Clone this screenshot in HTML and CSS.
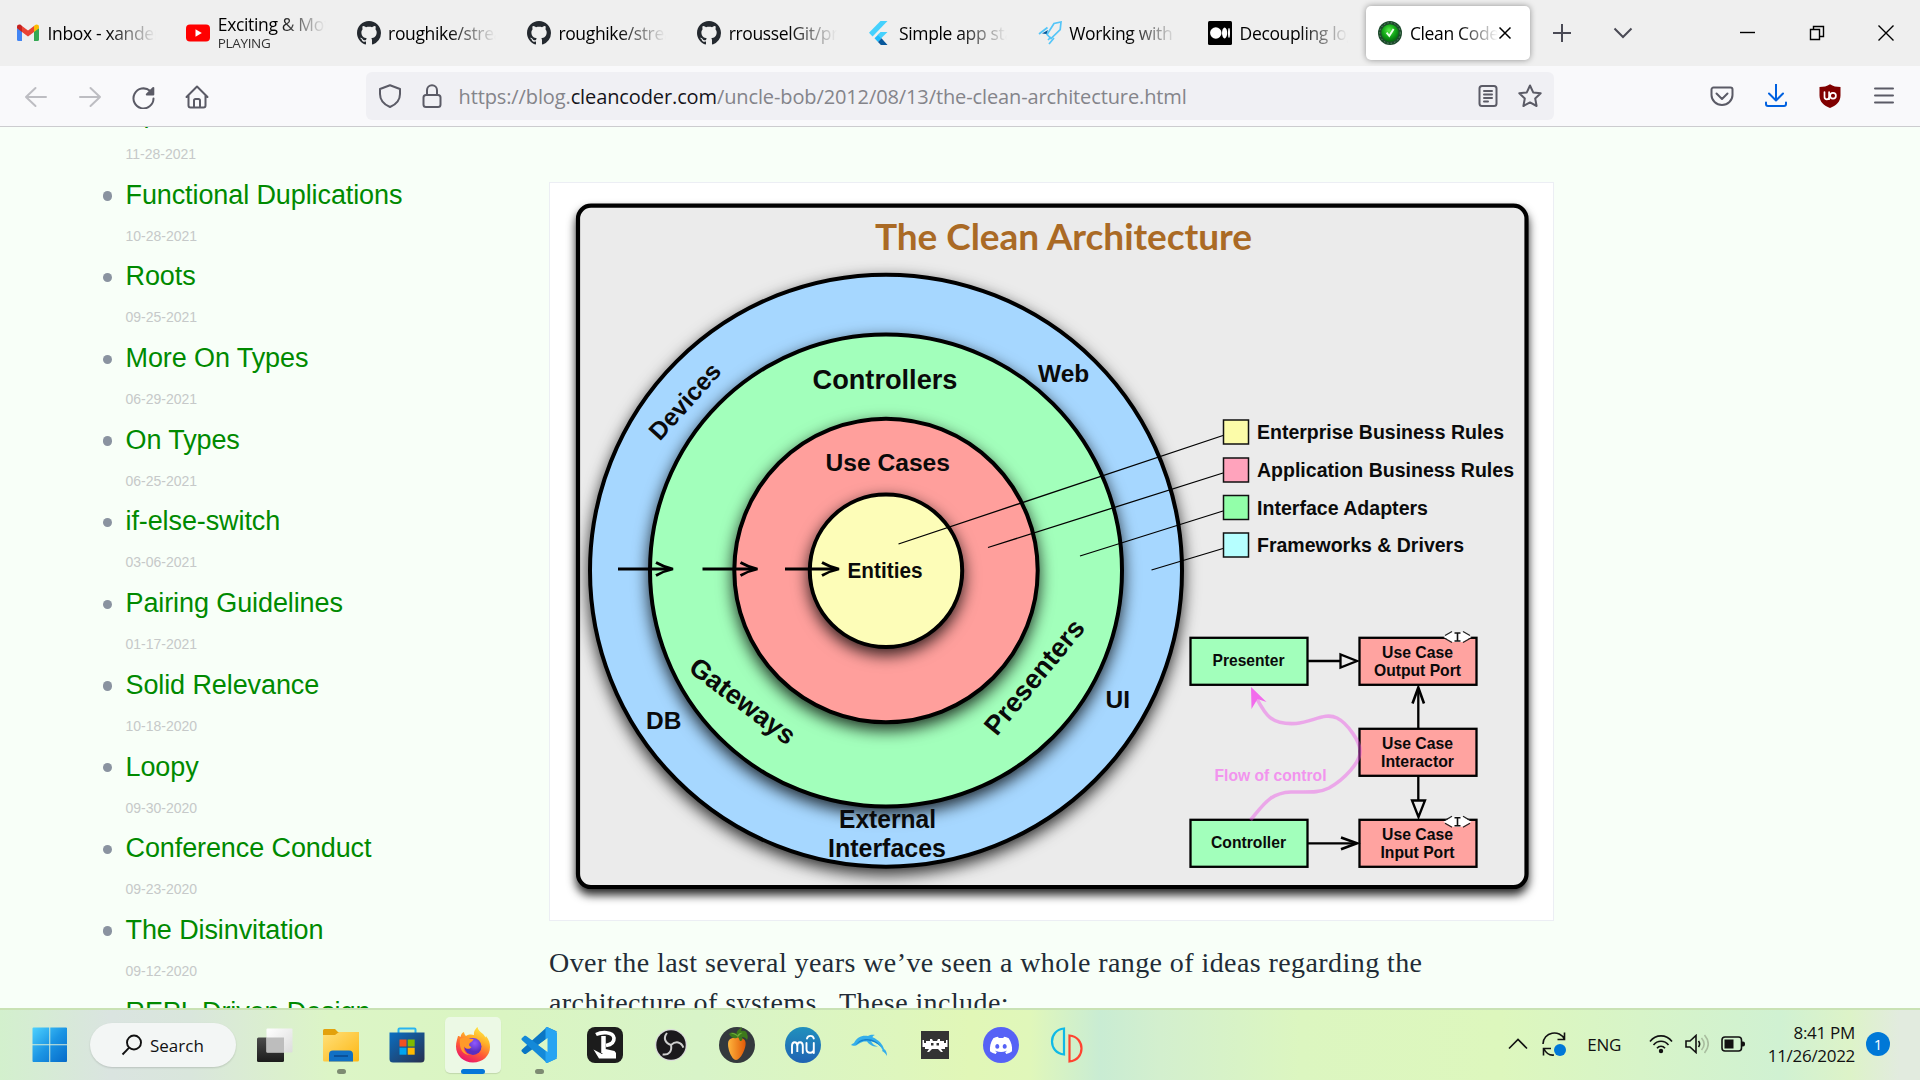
FILE: index.html
```html
<!DOCTYPE html>
<html lang="en">
<head>
<meta charset="utf-8">
<title>Clean Coder Blog</title>
<link rel="stylesheet" href="styles.css">
</head>
<body>
<svg class="defs" aria-hidden="true">
  <defs>
    <symbol id="github" viewBox="0 0 16 16"><path fill="#24292f" d="M8 0C3.58 0 0 3.58 0 8c0 3.54 2.29 6.53 5.47 7.59.4.07.55-.17.55-.38 0-.19-.01-.82-.01-1.49-2.01.37-2.53-.49-2.69-.94-.09-.23-.48-.94-.82-1.13-.28-.15-.68-.52-.01-.53.63-.01 1.08.58 1.23.82.72 1.21 1.87.87 2.33.66.07-.52.28-.87.51-1.07-1.78-.2-3.64-.89-3.64-3.95 0-.87.31-1.59.82-2.15-.08-.2-.36-1.02.08-2.12 0 0 .67-.21 2.2.82.64-.18 1.32-.27 2-.27s1.36.09 2 .27c1.53-1.04 2.2-.82 2.2-.82.44 1.1.16 1.92.08 2.12.51.56.82 1.27.82 2.15 0 3.07-1.87 3.75-3.65 3.95.29.25.54.73.54 1.48 0 1.07-.01 1.93-.01 2.2 0 .21.15.46.55.38A8 8 0 0 0 16 8c0-4.42-3.58-8-8-8z"/></symbol>
  </defs>
</svg>

<header class="tabstrip">
  <div class="tab">
    <svg class="fav" viewBox="0 0 24 24"><path fill="#4285f4" d="M1 7v11.5A1.5 1.5 0 0 0 2.500 20H6V10z"/><path fill="#34a853" d="M18 10v10h3.500a1.500 1.500 0 0 0 1.500-1.500V7z"/><path fill="#fbbc04" d="M18 5v6l5-3.800V6c0-2.400-2.500-3-4-1.900z"/><path fill="#ea4335" d="M6 11V5l6 4.600L18 5v6l-6 4.600z"/><path fill="#c5221f" d="M1 6v1.200L6 11V5L5 4.100C3.300 3 1 3.800 1 6z"/></svg>
    <span class="tab-title"><span>Inbox - xander</span></span>
  </div>
  <div class="tab">
    <svg class="fav" viewBox="0 0 24 24"><rect y="3.500" width="24" height="17" rx="4" fill="#f00"/><path fill="#fff" d="M9.500 8.300v7.400L15.800 12z"/></svg>
    <span class="tab-title two"><span>Exciting &amp; Mot</span><small>PLAYING</small></span>
  </div>
  <div class="tab"><svg class="fav"><use href="#github"/></svg><span class="tab-title"><span>roughike/stream</span></span></div>
  <div class="tab"><svg class="fav"><use href="#github"/></svg><span class="tab-title"><span>roughike/stream</span></span></div>
  <div class="tab"><svg class="fav"><use href="#github"/></svg><span class="tab-title"><span>rrousselGit/prov</span></span></div>
  <div class="tab">
    <svg class="fav" viewBox="0 0 24 24"><path fill="#45d1fd" d="M13.500 0 2 11.800l3.600 3.600L20.500 0z"/><path fill="#45d1fd" d="M13.500 11h7l-6.300 6.300-3.500-3.500z" /><path fill="#1fbcfd" d="m7.500 17.300 3.500-3.500 3.500 3.500-3.500 3.600z"/><path fill="#08589c" d="m11 20.900 3.500-3.600 6 6.700h-6.600z"/></svg>
    <span class="tab-title"><span>Simple app state</span></span>
  </div>
  <div class="tab">
    <svg class="fav" viewBox="0 0 24 24"><g fill="none" stroke="#54c5f8" stroke-width="1.700"><path d="M9 13.500 16 2.500 23 1l-.8 7.500L13 17.500z"/><path d="M1 13 9.500 6.500M11 23l5-6M10 19l3-3"/></g><path fill="#01579b" d="m4 12.500 6-3.500-1.500 4z"/></svg>
    <span class="tab-title"><span>Working with s</span></span>
  </div>
  <div class="tab">
    <svg class="fav" viewBox="0 0 24 24"><rect width="24" height="24" rx="1.500" fill="#000"/><circle cx="7.800" cy="12" r="5.700" fill="#fff"/><ellipse cx="16.600" cy="12" rx="2.600" ry="5.400" fill="#fff"/><ellipse cx="21" cy="12" rx="1" ry="4.900" fill="#fff"/></svg>
    <span class="tab-title"><span>Decoupling log</span></span>
  </div>
  <div class="tab active">
    <svg class="fav" viewBox="0 0 24 24"><defs><radialGradient id="orb" cx=".45" cy=".35" r=".6"><stop offset="0" stop-color="#5df04c"/><stop offset=".6" stop-color="#12a817"/><stop offset="1" stop-color="#067010"/></radialGradient></defs><circle cx="12" cy="12" r="12" fill="#1d4a2c"/><circle cx="12" cy="12" r="10.300" fill="none" stroke="#6c9a78" stroke-width=".8" stroke-dasharray="1.500 2"/><circle cx="12" cy="12" r="8.700" fill="url(#orb)"/><path d="m8.600 11.600 2.700 3.200 4.300-6.800" fill="none" stroke="#eaffea" stroke-width="1.900"/></svg>
    <span class="tab-title short"><span>Clean Coder</span></span>
    <svg class="tab-close" viewBox="0 0 14 14"><path d="m1.500 1.500 11 11m0-11-11 11"/></svg>
  </div>
  <svg class="plus" viewBox="0 0 20 20"><path d="M10 1v18M1 10h18"/></svg>
  <svg class="alltabs" viewBox="0 0 20 12"><path d="m1.500 1.500 8.500 8.500 8.500-8.500"/></svg>
  <div class="winctl">
    <svg viewBox="0 0 16 16"><path d="M0 7.500h15"/></svg>
    <svg viewBox="0 0 16 16"><path d="M1.500 4.500h9v10h-9zM4.500 4.500v-3h10v10h-4"/></svg>
    <svg viewBox="0 0 16 16"><path d="m.5.500 15 15m0-15-15 15"/></svg>
  </div>
</header>

<nav class="toolbar">
  <div class="nav-btns">
    <svg class="off" viewBox="0 0 24 24"><path d="M22 12H2m9.500-9L2 12l9.500 9"/></svg>
    <svg class="off" viewBox="0 0 24 24"><path d="M2 12h20m-9.500-9L22 12l-9.500 9"/></svg>
    <svg viewBox="0 0 24 24"><path d="M22.500 13.500A10 10 0 1 1 19 5.800"/><path fill="#5b5b66" d="M22.300 3v6.500h-6.500z"/></svg>
    <svg viewBox="0 0 24 24"><path d="M1.500 12 12 1.500 22.500 12M3.500 10.500v10a2 2 0 0 0 2 2h13a2 2 0 0 0 2-2v-10M9 22v-6.500a1.500 1.500 0 0 1 1.500-1.500h3a1.500 1.500 0 0 1 1.500 1.500V22"/></svg>
  </div>
  <div class="urlbar">
    <svg viewBox="0 0 24 24"><path d="M12 1.200 22 5v5c0 6.500-4 10.500-10 13C6 20.500 2 16.500 2 10V5z"/></svg>
    <svg class="lock" viewBox="0 0 24 24"><rect x="3.500" y="11" width="17" height="12" rx="2.500"/><path d="M7 11V6.200a5 5 0 0 1 10 0V11"/></svg>
    <span class="url">https://blog.<b>cleancoder.com</b>/uncle-bob/2012/08/13/the-clean-architecture.html</span>
    <svg class="reader" viewBox="0 0 24 24"><rect x="3.500" y="2" width="17" height="20" rx="2.500"/><path d="M8 7h8M8 10.500h8M8 14h8M8 17.500h4"/></svg>
    <svg class="star" viewBox="0 0 24 24"><path d="m12 1.500 3.200 6.900 7.500.9-5.500 5.200 1.400 7.500L12 18.400 5.400 22l1.400-7.500L1.300 9.300l7.500-.9z"/></svg>
  </div>
  <div class="ext">
    <svg viewBox="0 0 24 24"><path d="M3.500 3.500h17a2 2 0 0 1 2 2V11a10.500 10 0 0 1-21 0V5.500a2 2 0 0 1 2-2zM6.500 9.500 12 15l5.500-5.500"/></svg>
    <svg class="blue" viewBox="0 0 24 24"><path d="M12 0v16M5 9.500 12 16.500 19 9.500M2 18.500V20a2 2 0 0 0 2 2h16a2 2 0 0 0 2-2v-1.500"/></svg>
    <svg class="ublock" viewBox="0 0 24 24"><path fill="#800000" d="M12 .3c3 2.200 6.500 2.700 10.500 2.700v8.500C22.500 18 18 21.500 12 24 6 21.500 1.500 18 1.500 11.500V3C5.500 3 9 2.500 12 .3z"/><path d="M6.500 8v5a2 2 0 0 0 4.600 0V8m0 7.200V8" fill="none" stroke="#fff" stroke-width="1.700"/><circle cx="15" cy="11.700" r="2.900" fill="none" stroke="#fff" stroke-width="1.700"/></svg>
    <svg viewBox="0 0 24 24"><path d="M3 4.500h18M3 11.500h18M3 18.500h18"/></svg>
  </div>
</nav>

<main class="page">
  <aside class="sidebar">
    <ul>
      <li><a>Spacewar</a><time>11-28-2021</time></li>
      <li><a>Functional Duplications</a><time>10-28-2021</time></li>
      <li><a>Roots</a><time>09-25-2021</time></li>
      <li><a>More On Types</a><time>06-29-2021</time></li>
      <li><a>On Types</a><time>06-25-2021</time></li>
      <li><a>if-else-switch</a><time>03-06-2021</time></li>
      <li><a>Pairing Guidelines</a><time>01-17-2021</time></li>
      <li><a>Solid Relevance</a><time>10-18-2020</time></li>
      <li><a>Loopy</a><time>09-30-2020</time></li>
      <li><a>Conference Conduct</a><time>09-23-2020</time></li>
      <li><a>The Disinvitation</a><time>09-12-2020</time></li>
      <li><a>REPL Driven Design</a></li>
    </ul>
  </aside>
  <article>
    <figure>
      <svg class="diagram" viewBox="549 182 1005 739">
        <defs>
          <filter id="drop" x="-20%" y="-20%" width="140%" height="140%"><feDropShadow dx="0" dy="6" stdDeviation="8" flood-color="#000" flood-opacity=".8"/></filter>
          <filter id="dropFrame" x="-5%" y="-5%" width="110%" height="112%"><feDropShadow dx="0" dy="6" stdDeviation="5" flood-color="#000" flood-opacity=".85"/></filter>
          <g id="head"><path d="M-17-6.500Q-9-1.800 0 0-9 1.800-17 6.500" fill="none" stroke="#000" stroke-width="2.800"/></g>
        </defs>
        <rect x="578" y="205.700" width="948.500" height="681.300" rx="13" fill="#ebebeb" stroke="#000" stroke-width="4.200" filter="url(#dropFrame)"/>
        <text class="title" x="875" y="249.500" textLength="377">The Clean Architecture</text>

        <g stroke="#000" stroke-width="4">
          <circle cx="886" cy="570.700" r="296" fill="#a6d7ff" filter="url(#drop)"/>
          <circle cx="886" cy="570.500" r="236" fill="#a2ffbb" filter="url(#drop)"/>
          <circle cx="886" cy="570.500" r="151.700" fill="#ff9f9c" filter="url(#drop)"/>
          <circle cx="886" cy="570.700" r="76.200" fill="#fdfdb8" filter="url(#drop)"/>
        </g>

        <g stroke="#000" stroke-width="1.300" fill="none">
          <path d="M898.500 544 1223 435.500M988 547.500 1223 473M1080 556 1223 511M1151.500 570 1223 548.500"/>
        </g>
        <g stroke="#111" stroke-width="1.500">
          <rect x="1223.500" y="420" width="25" height="24" fill="#fcfca9"/>
          <rect x="1223.500" y="458" width="25" height="24" fill="#ffa3bc"/>
          <rect x="1223.500" y="495.500" width="25" height="24" fill="#92ffa9"/>
          <rect x="1223.500" y="533" width="25" height="24" fill="#b6ffff"/>
        </g>
        <g class="lbl" font-size="20">
          <text x="1257" y="439" textLength="247" lengthAdjust="spacingAndGlyphs">Enterprise Business Rules</text>
          <text x="1257" y="477" textLength="257" lengthAdjust="spacingAndGlyphs">Application Business Rules</text>
          <text x="1257" y="514.500" textLength="171" lengthAdjust="spacingAndGlyphs">Interface Adapters</text>
          <text x="1257" y="552" textLength="207" lengthAdjust="spacingAndGlyphs">Frameworks &amp; Drivers</text>
        </g>

        <g class="lbl">
          <text x="812.500" y="389" font-size="27" textLength="145" lengthAdjust="spacingAndGlyphs">Controllers</text>
          <text x="825.500" y="471" font-size="24.800" textLength="124.500" lengthAdjust="spacingAndGlyphs">Use Cases</text>
          <text x="847.500" y="578" font-size="21.500" textLength="75" lengthAdjust="spacingAndGlyphs">Entities</text>
          <text x="1038" y="381.500" font-size="24.500">Web</text>
          <text x="646" y="728.500" font-size="24.500">DB</text>
          <text x="1105.500" y="708" font-size="24.500">UI</text>
          <text x="839" y="827.500" font-size="25" textLength="97" lengthAdjust="spacingAndGlyphs">External</text>
          <text x="828" y="857.300" font-size="25" textLength="118" lengthAdjust="spacingAndGlyphs">Interfaces</text>
          <text transform="translate(684.500 401) rotate(-48)" y="9" text-anchor="middle" font-size="24.800">Devices</text>
          <text transform="translate(742 702) rotate(37)" y="8" text-anchor="middle" font-size="26.800">Gateways</text>
          <text transform="translate(1034.500 677) rotate(-50.500)" y="9" text-anchor="middle" font-size="27.200">Presenters</text>
        </g>

        <g stroke="#000" stroke-width="2.800"><path d="M618 569h52M702.500 569h52M785 569h52"/></g>
        <use href="#head" x="673" y="569"/><use href="#head" x="757.500" y="569"/><use href="#head" x="839" y="569"/>

        <g stroke="#000" stroke-width="2.300">
          <rect x="1190.500" y="637.800" width="117" height="47" fill="#a2ffbb"/>
          <rect x="1190.500" y="819.800" width="117" height="47" fill="#a2ffbb"/>
          <rect x="1359.500" y="637.800" width="117" height="47" fill="#ffa3a0"/>
          <rect x="1359.500" y="728.800" width="117" height="47" fill="#ffa3a0"/>
          <rect x="1359.500" y="819.800" width="117" height="47" fill="#ffa3a0"/>
          <path d="M1308 661h32M1418.300 728v-40M1418.300 776v24M1308 843.300h48" fill="none"/>
          <path d="M1340.500 654.500v13l16.500-6.500zM1412 800.500h13l-6.500 16.500z" fill="#ebebeb"/>
          <path d="M1341 837.500 1357 843.300 1341 849.200M1412.500 703.500 1418.300 687.500 1424 703.500" fill="none" stroke-width="2.600"/>
        </g>
        <g class="lbl" font-size="16.500">
          <text x="1212.500" y="666" textLength="72" lengthAdjust="spacingAndGlyphs">Presenter</text>
          <text x="1211" y="848" textLength="75" lengthAdjust="spacingAndGlyphs">Controller</text>
          <text x="1382" y="657.500" textLength="71" lengthAdjust="spacingAndGlyphs">Use Case</text>
          <text x="1374" y="675.800" textLength="87" lengthAdjust="spacingAndGlyphs">Output Port</text>
          <text x="1382" y="748.500" textLength="71" lengthAdjust="spacingAndGlyphs">Use Case</text>
          <text x="1381" y="766.800" textLength="73" lengthAdjust="spacingAndGlyphs">Interactor</text>
          <text x="1382" y="839.500" textLength="71" lengthAdjust="spacingAndGlyphs">Use Case</text>
          <text x="1380.500" y="857.800" textLength="74" lengthAdjust="spacingAndGlyphs">Input Port</text>
          <text x="1214.500" y="780.700" textLength="112" lengthAdjust="spacingAndGlyphs" fill="#f294ee">Flow of control</text>
        </g>
        <g>
          <path d="M1443.500 637l9-5h10l9 5-9 5h-10zM1443.500 821.700l9-5h10l9 5-9 5h-10z" fill="#fff"/>
          <path d="M1445 635.500l7-4M1463 631.500l7 4M1445 638.500l7 4M1463 642.500l7-4M1445 820.200l7-4M1463 816.200l7 4M1445 823.200l7 4M1463 827.200l7-4" stroke="#222" stroke-width="1.200"/>
          <path d="M1454.500 633h6M1457.500 633v8M1454.500 641h6M1454.500 817.700h6M1457.500 817.700v8M1454.500 825.700h6" stroke="#111" stroke-width="1.600"/>
        </g>
        <g fill="none" stroke="#ec4be6" stroke-opacity=".42" stroke-width="3.600">
          <path d="M1250.500 820C1264 804 1270 793 1291 792 1310 792 1319 793 1329 788 1345 779 1360 762 1360 752 1361 742 1347 723 1337 718 1325 712 1313 722 1296 723.500 1270 725 1265 714 1256 697"/>
        </g>
        <path d="M1251 687 1266.500 702 1257.500 699 1251.500 709z" fill="#f26bec"/>
      </svg>
    </figure>
    <p>Over the last several years we’ve seen a whole range of ideas regarding the architecture of systems. &nbsp;These include:</p>
  </article>
</main>

<footer class="taskbar">
  <div class="start"><svg viewBox="0 0 36 36"><defs><linearGradient id="w" x1="0" y1="0" x2="36" y2="36" gradientUnits="userSpaceOnUse"><stop offset="0" stop-color="#4fd3ff"/><stop offset=".5" stop-color="#1b95e4"/><stop offset="1" stop-color="#0569c8"/></linearGradient></defs><path fill="url(#w)" d="M.5 1.500A1 1 0 0 1 1.500.5H17.500V17.500H.5zM18.500.5h16a1 1 0 0 1 1 1v16h-17zM.5 18.500h17v17h-16a1 1 0 0 1-1-1zM18.500 18.500h17v16a1 1 0 0 1-1 1h-16z"/></svg></div>
  <div class="search"><svg viewBox="0 0 22 22"><circle cx="13" cy="8.500" r="7" /><path d="M8.200 13.600 1.500 20.500"/></svg><span>Search</span></div>
  <div class="apps">
    <div class="app"><svg viewBox="0 0 36 36"><defs><linearGradient id="tv" x2="0" y2="1"><stop stop-color="#4b4b4b"/><stop offset="1" stop-color="#1c1c1c"/></linearGradient><linearGradient id="tw" x2="1" y2="1"><stop stop-color="#fff"/><stop offset="1" stop-color="#dcdcdc"/></linearGradient></defs><rect x="0" y="10.500" width="27" height="24.500" rx="1.500" fill="url(#tv)"/><rect x="9.500" y="1.500" width="26" height="24" rx="1" fill="url(#tw)"/><path fill="#bdbdbd" d="M9.500 10.500H27v15H9.500z"/></svg></div>
    <div class="app run"><svg viewBox="0 0 36 36"><defs><linearGradient id="fo" x2="1" y2="1"><stop stop-color="#ffe07a"/><stop offset="1" stop-color="#fdb714"/></linearGradient></defs><path fill="#e3a10c" d="M0 3.500A1.500 1.500 0 0 1 1.500 2H12l3 3h19.500A1.500 1.500 0 0 1 36 6.500V12H0z"/><path fill="url(#fo)" d="M0 8h12l4-3h20v28a1.500 1.500 0 0 1-1.500 1.500h-33A1.500 1.500 0 0 1 0 33z"/><path fill="#1170c4" d="M6 34.500v-7a4 4 0 0 1 4-4h16a4 4 0 0 1 4 4v7z"/><path stroke="#0a4a90" stroke-width="1.600" d="M11 29h14"/></svg></div>
    <div class="app"><svg viewBox="0 0 36 36"><defs><linearGradient id="st" x2="1" y2="1"><stop stop-color="#0a6fc2"/><stop offset="1" stop-color="#28304f"/></linearGradient></defs><path d="M9.500 7V2.500A1 1 0 0 1 10.500 1.500h15a1 1 0 0 1 1 1V7" fill="none" stroke="#28b4f0" stroke-width="2"/><path fill="url(#st)" d="M.5 5.500h35V32a3.500 3.500 0 0 1-3.500 3.500H4A3.500 3.500 0 0 1 .5 32z"/><path fill="#f25022" d="M10.500 12.500h7v7h-7z"/><path fill="#7fba00" d="M18.700 12.500h7v7h-7z"/><path fill="#00a4ef" d="M10.500 20.700h7v7h-7z"/><path fill="#ffb900" d="M18.700 20.700h7v7h-7z"/></svg></div>
    <div class="app on"><svg viewBox="0 0 36 36"><defs><linearGradient id="ff" x1=".8" x2=".3" y2="1"><stop stop-color="#fff04a"/><stop offset=".35" stop-color="#ffb029"/><stop offset=".65" stop-color="#ff5a35"/><stop offset="1" stop-color="#e8126e"/></linearGradient><radialGradient id="fp" cx=".6" cy=".3"><stop stop-color="#9059ff"/><stop offset="1" stop-color="#5a2fc0"/></radialGradient></defs><path fill="url(#ff)" d="M3 9c1 0 2 .5 2.500 1C6 7 7.500 5.500 9 5c0 1.500 1 3 2 4 3-2 6-1.500 8-1C18.500 4 21 1.500 22.500 0c.5 3.500 3 5 5.500 7 1 1 2 2.500 2.500 3.500L31 9c3 3.500 4 7.500 4 11 0 9-7.500 15.500-17 15.500S1 28.500 1 19.500C1 15 2.500 11.500 3 9z"/><circle cx="18" cy="19.500" r="8.500" fill="url(#fp)"/><path fill="#ff9a2a" d="M5 12c3-2 7-2 9.500 0h4c0 2-3 3-4 4.500-1 2 0 3 2 3.500-2 3-6 2-7.500-.5C8.500 25 12 28 17 28c-8 1-13.500-5-12-16z"/></svg></div>
    <div class="app run"><svg viewBox="0 0 36 36"><path fill="#0a76c4" d="M26 0 1 22.500c-.7.7-.7 1.600 0 2.300l2 1.900c.6.500 1.500.6 2.200 0L36 4.500z"/><path fill="#1489d8" d="M26 36 1 13.300c-.7-.7-.7-1.600 0-2.300l2-1.800c.6-.6 1.500-.6 2.200-.1L36 31.500z"/><path fill="#27a4f2" d="M26 0l8.500 4a2.500 2.500 0 0 1 1.500 2.300v23.400a2.500 2.500 0 0 1-1.500 2.300L26 36c-1 .3-1.500-.5-1.500-1.500v-33C24.500.5 25 0 26 0z"/><path fill="#dcf7c6" d="M26.500 11v14l-9.300-7z"/></svg></div>
    <div class="app"><svg viewBox="0 0 36 36"><rect width="36" height="36" rx="8" fill="#1c1c1c"/><g fill="none" stroke="#fff"><path stroke-width="3.600" d="M9 7.500C14 5 26 4 27 11c.4 6-5 7-8 7.500" /><path stroke-width="4.500" d="M16.500 9v17"/></g><path fill="#fff" d="M6.500 22.500 15 27l3.500-5 9 2 1.500 2v5.500H12z"/></svg></div>
    <div class="app"><svg viewBox="0 0 36 36"><circle cx="18" cy="18" r="16" fill="#dadada"/><circle cx="18" cy="18" r="14.700" fill="#1b191c"/><g fill="none" stroke="#cfcfcf" stroke-width="2"><path id="ob" d="M18 18C12 16 10 11 14 6"/><use href="#ob" transform="rotate(120 18 18)"/><use href="#ob" transform="rotate(240 18 18)"/></g></svg></div>
    <div class="app"><svg viewBox="0 0 36 36"><defs><linearGradient id="fl" x2="1"><stop stop-color="#ffb43c"/><stop offset="1" stop-color="#e05a08"/></linearGradient></defs><circle cx="18" cy="18" r="18" fill="#34393d"/><path fill="url(#fl)" d="M9.500 14C12 9 25 9 26.500 15c1 6-5 18-9.500 18S7.500 20 9.500 14z"/><path fill="#3d7a1c" d="M10 7c3-3 6-1 7.500 0 0-4 3.500-5 5.500-7 0 2-1 3-1 4 3-1 6 0 6 3 1 2 1 4 0 6-1-2-3-3-5-3 1 3 0 4-2 4-1-2-1-3-2-4-2 2-6 2-9-3z"/><path fill="#6fae3a" d="M12 6.500c2-1 5 0 6.500 2 1-2 3-3 5-2.500-2 1-3 2-4.500 4-2-2-4-3-7-3.500z"/></svg></div>
    <div class="app"><svg viewBox="0 0 36 36"><defs><linearGradient id="mu" x2="0" y2="1"><stop stop-color="#2190bd"/><stop offset="1" stop-color="#1f63b3"/></linearGradient></defs><circle cx="18" cy="18" r="18" fill="url(#mu)"/><path d="M7 26v-7c0-5 5.300-5 5.300 0v6c0-1 0-6 0-6 0-5 5.500-5 5.500 0v7M21.500 16v6c0 5 7.300 5 7.300 0v-6M28.800 20v6M22 11.500c1-3.500 6-3.500 6.800 0" fill="none" stroke="#fff" stroke-width="1.900" stroke-linecap="round"/></svg></div>
    <div class="app"><svg viewBox="0 0 36 36"><path fill="#35aeea" d="M0 18c1-1 2-1.500 3-2 3-6 8-8 14-7 2-1.500 5-1.500 7-1-2 .8-2.500 1.500-2.500 2.300C28 13 32 18 33 22c2 1 3 4 3 7-2-3-3-4-5-5 1-1 .5-1.500 0-2-2-4-6-7-11-8 1 3 4 5 7 5.500-5 .5-9-2-11-5C10 14 8 17 5 18.500c-2 .5-4 0-5-.5z"/><path fill="#1580cc" d="M5 18c2-4 6-6 11-6 6 0 11 3 14 8-4-4-8-6-13-6.500C12 13 8 14.500 5 18z"/></svg></div>
    <div class="app"><svg viewBox="0 0 36 36"><rect x="4" y="4" width="28" height="28" fill="#333"/><path fill="#fff" d="M13 12h2l1 2h4l1-2h2v2h4v2h2v-3h1.500v7H28v2h-4l2 3h-2l-3-3h-6l-3 3h-2l2-3H8v-2H5.500v-7H7v3h2v-2h4zM14 16v2.500h2.500V16zm5.500 0v2.500H22V16z"/></svg></div>
    <div class="app"><svg viewBox="0 0 36 36"><circle cx="18" cy="18" r="18" fill="#5662f6"/><path fill="#fff" d="M25.700 11.300c-1.600-.8-3.100-1.300-4.700-1.500l-.7 1.300c-1.600-.2-3-.2-4.600 0L15 9.800c-1.600.2-3.200.8-4.700 1.500C7.400 15.700 6.600 20 7 24.200c1.900 1.400 3.800 2.200 5.700 2.700l1.200-2c-.6-.3-1.200-.5-1.700-.9l.4-.3c3.600 1.600 7.400 1.600 10.800 0l.4.300c-.5.4-1.100.6-1.700.9l1.200 2c2-.5 3.900-1.300 5.700-2.700.5-4.900-.8-9.100-3.300-12.900zM14.300 21.700c-1.100 0-2-1-2-2.300s.9-2.300 2-2.300 2 1 2 2.300-.9 2.300-2 2.300zm7.400 0c-1.100 0-2-1-2-2.300s.9-2.300 2-2.300 2 1 2 2.300-.9 2.300-2 2.300z"/></svg></div>
    <div class="app"><svg viewBox="0 0 36 36"><path d="M15 1.500v26C-1 26-1 3 15 1.500z" fill="none" stroke="#10b9e6" stroke-width="2.200"/><path d="M20.500 8.500v26c16-1.500 16-24.500 0-26z" fill="none" stroke="#ff4330" stroke-width="2.200"/></svg></div>
  </div>
  <div class="tray">
    <svg class="chev" viewBox="0 0 20 12"><path d="m1 10.500 9-9 9 9"/></svg>
    <svg class="sync" viewBox="0 0 24 24"><path d="M1 12C1 0 18-3 22.500 7.500M22.500.5v7h-7M1.500 23.500v-7H9M2 17c2 4 6 6.500 10 6"/><circle cx="18" cy="18" r="6" fill="#0078d7" stroke="none"/></svg>
    <span class="lang">ENG</span>
    <svg class="wifi" viewBox="0 0 24 20"><path d="M1 7.500c6-7.500 16-7.500 22 0M4.500 11c4-5 11-5 15 0M8 14.200c2-2.700 6-2.700 8 0"/><circle cx="12" cy="17" r="2.200" fill="#111" stroke="none"/></svg>
    <svg class="vol" viewBox="0 0 24 20"><path d="M1 7h4l6-5.500v17L5 13H1zM13.500 7c1.500 2 1.500 4 0 6"/><path d="M16.500 4c3.500 4 3.500 8 0 12M19.500 1c5 6 5 12 0 18" stroke="#a9bd9f"/></svg>
    <svg class="bat" viewBox="0 0 24 16"><rect x="1" y="1" width="19.500" height="14" rx="3"/><path fill="#111" stroke="none" d="M3.500 3.500h9v9h-9zM20.500 5.500H22a2 2 0 0 1 2 2v1a2 2 0 0 1-2 2h-1.500z"/></svg>
    <div class="clock"><span>8:41 PM</span><span>11/26/2022</span></div>
    <span class="badge">1</span>
  </div>
</footer>
</body>
</html>
```
FILE: styles.css
```css
* { box-sizing: border-box; }
body {
  margin: 0;
  width: 1920px;
  height: 1080px;
  overflow: hidden;
  display: flex;
  flex-direction: column;
  font-family: "Open Sans", "Noto Sans", sans-serif;
  color: #15141a;
}
svg { display: block; flex: none; fill: none; }
.defs { width: 0; height: 0; position: absolute; }

/* tab strip */
.tabstrip {
  height: 66px;
  flex: none;
  background: #efefef;
  display: flex;
  align-items: center;
  padding: 0 0 0 4px;
}
.tab {
  width: 164px;
  height: 54px;
  margin-right: 6.300px;
  padding-left: 12px;
  display: flex;
  align-items: center;
  gap: 8px;
  flex: none;
  border-radius: 5px;
}
.tab.active {
  background: #fff;
  box-shadow: 0 0 6px rgba(0, 0, 0, .4);
  margin-right: 22px;
}
.fav { width: 24px; height: 24px; }
.tab-title {
  width: 108px;
  margin-left: -.5px;
  overflow: hidden;
  white-space: nowrap;
  font-size: 17.500px;
  line-height: 26px;
  letter-spacing: -.35px;
  color: #000;
  -webkit-mask-image: linear-gradient(90deg, #000 55%, transparent);
  mask-image: linear-gradient(90deg, #000 55%, transparent);
}
.tab-title.two { line-height: 22px; padding-bottom: 2px; }
.tab-title small { display: block; font-size: 13.500px; line-height: 17px; color: #333; }
.tab-title.short { width: 88px; margin-right: -8px; }
.tab-close { width: 14px; height: 14px; stroke: #000; stroke-width: 1.500; }
.plus { width: 20px; height: 20px; stroke: #4a4a55; stroke-width: 2; }
.alltabs { width: 20px; height: 12px; margin-left: 41px; stroke: #4a4a55; stroke-width: 2; }
.winctl { margin-left: auto; padding-right: 26px; display: flex; gap: 53px; }
.winctl svg { width: 16px; height: 16px; stroke: #000; stroke-width: 1.400; }

/* navigation toolbar */
.toolbar {
  height: 61px;
  flex: none;
  background: #f9f9fb;
  border-bottom: 1px solid #cccccf;
  display: flex;
  align-items: center;
}
.toolbar svg { width: 24px; height: 24px; stroke: #5b5b66; stroke-width: 2; stroke-linejoin: round; stroke-linecap: round; }
.nav-btns { width: 366px; padding: 1px 0 0 24px; display: flex; gap: 29.500px; }
.toolbar .off { stroke: #bdbdc2; }
.urlbar {
  width: 1188px;
  height: 48px;
  border-radius: 6px;
  background: #f0f0f4;
  display: flex;
  align-items: center;
  padding: 0 12px;
}
.urlbar .lock { margin-left: 18px; }
.url { margin-left: 14.500px; padding-top: 1px; flex: 1; font-size: 20px; color: #84848a; white-space: nowrap; letter-spacing: -.115px; }
.url b { font-weight: 400; color: #15141a; }
.urlbar .star { margin-left: 18px; }
.ext { flex: 1; display: flex; justify-content: flex-end; gap: 30px; padding-right: 24px; }
.toolbar .blue { stroke: #0061e0; }
.toolbar .ublock { stroke: none; }

/* page */
.page {
  height: 881px;
  flex: none;
  overflow: hidden;
  background: #f8fff8;
  display: flex;
  align-items: flex-start;
}
.sidebar { width: 549px; font-family: "Liberation Sans", Arial, sans-serif; }
.sidebar ul { margin: -32px 0 0; padding: 0 0 0 102px; list-style: none; }
.sidebar li { height: 81.700px; position: relative; padding-left: 23.500px; }
.sidebar li::before {
  content: "";
  position: absolute;
  left: .5px;
  top: 14.500px;
  width: 9.400px;
  height: 9.400px;
  border-radius: 50%;
  background: #8a93a0;
}
.sidebar a { display: block; font-size: 27px; line-height: 36px; letter-spacing: -.1px; color: #008a00; white-space: nowrap; }
.sidebar time { display: block; margin-top: 14px; font-size: 14px; line-height: 18px; color: #c6c9c9; }
article { width: 1005px; padding-top: 55px; }
figure { margin: 0; height: 739px; background: #fff; border: 1px solid #eceef4; }
.diagram { width: 1005px; height: 739px; margin: -1px; }
.lbl { font-family: "Liberation Sans", Arial, sans-serif; font-weight: 700; }
.lbl text { fill: #0a0a0a; }
.lbl text[fill] { fill: #f294ee; }
.title { font: 700 37px Lato, sans-serif; fill: #aa6a25; }
article p {
  margin: 22px 0 0;
  font: 28px/40px "Liberation Serif", serif;
  letter-spacing: .42px;
  color: #222c36;
}

/* taskbar */
.taskbar {
  height: 72px;
  flex: none;
  display: flex;
  align-items: center;
  border-top: 2px solid #c9e2b4;
  background:
    linear-gradient(90deg, #d3f0cd 0, #dae4e0 110px, #d9e6dc 190px, #dcf5c6 330px, #daf5c2 500px, #d8f4c8 700px, #def6bd 900px, #e1f7b7 970px, #e0f7ba 1030px, #c9ecd3 1100px, #d3efce 1160px, #dcf6c0 1300px, #ddf7bd 1500px, #d7f4c8 1640px, #d0f1d2 1780px, #ddf3c8 1850px, #e2ebdf 1900px);
}
.start { width: 90px; padding-left: 31.500px; }
.start svg { width: 35.500px; height: 35.500px; }
.search {
  width: 146px;
  height: 44px;
  border-radius: 22px;
  background: #f3f6f5;
  box-shadow: 0 1px 2px rgba(0, 0, 0, .15);
  display: flex;
  align-items: center;
  padding-left: 31px;
  gap: 7px;
  font-size: 17px;
  color: #111;
}
.search svg { width: 22px; height: 22px; stroke: #111; stroke-width: 1.900; }
.apps { display: flex; gap: 10px; margin-left: 11px; }
.app {
  width: 56px;
  height: 56px;
  border-radius: 5px;
  display: flex;
  align-items: center;
  justify-content: center;
  position: relative;
}
.app svg { width: 36px; height: 36px; }
.app.on { background: #ecf9e5; box-shadow: 0 1px 1px rgba(0, 0, 0, .12); }
.app.run::after, .app.on::after {
  content: "";
  position: absolute;
  bottom: -1px;
  width: 9px;
  height: 5px;
  border-radius: 3px;
  background: #7d8b72;
}
.app.on::after { width: 24px; background: #0477d8; }
.tray { margin-left: auto; display: flex; align-items: center; padding: 0 30px 2px 0; font-size: 17px; color: #111; }
.tray svg { stroke: #111; stroke-width: 1.600; }
.chev { width: 20px; height: 12px; }
.sync { width: 24px; height: 24px; margin-left: 14px; }
.lang { margin-left: 21px; letter-spacing: -.3px; }
.wifi { width: 24px; height: 20px; margin-left: 28px; }
.vol { width: 24px; height: 20px; margin-left: 12px; }
.bat { width: 24px; height: 16px; margin-left: 12px; }
.clock { width: 110px; text-align: right; line-height: 23px; letter-spacing: -.3px; display: flex; flex-direction: column; }
.badge {
  width: 24px;
  height: 24px;
  margin-left: 11px;
  border-radius: 50%;
  background: #0078d7;
  color: #fff;
  font-size: 15px;
  line-height: 24px;
  text-align: center;
}
```
